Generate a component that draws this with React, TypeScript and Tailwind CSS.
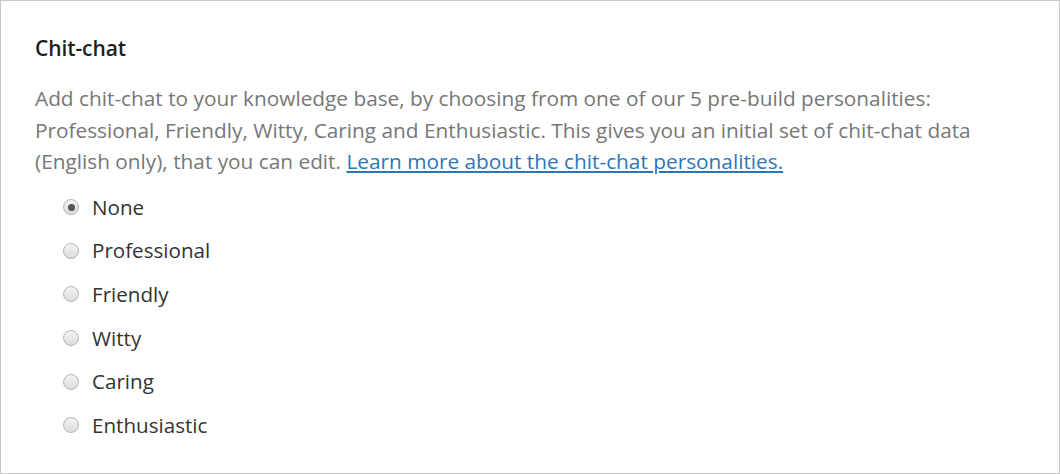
import React from "react";

const options = ["None", "Professional", "Friendly", "Witty", "Caring", "Enthusiastic"];

function Radio({ checked }: { checked: boolean }) {
  return (
    <span className="relative inline-flex h-[16px] w-[16px] shrink-0 items-center justify-center rounded-full border border-[#b4b4b4] bg-gradient-to-b from-[#f4f4f4] to-[#dcdcdc]">
      {checked && <span className="h-[7px] w-[7px] rounded-full bg-[#555]" />}
    </span>
  );
}

export default function App() {
  return (
    <div className="h-[474px] w-[1060px] bg-white" style={{ fontFamily: '"Open Sans", "Noto Sans", sans-serif' }}>
      <div className="h-full w-full border border-[#c8c8c8] pl-[34px] pr-4 pt-[33px]">
        <h2 className="text-[21px] font-semibold leading-[28px] text-[#1f1f1f] tracking-[-0.1px]">Chit-chat</h2>
        <p className="mt-[21px] w-[990px] text-[20.8px] leading-[31.5px] text-[#777]">
          Add chit-chat to your knowledge base, by choosing from one of our 5 pre-build personalities: Professional, Friendly, Witty, Caring and Enthusiastic. This gives you an initial set of chit-chat data (English only), that you can edit.{" "}
          <a href="#" className="text-[#2f75b5] underline">Learn more about the chit-chat personalities.</a>
        </p>
        <div className="mt-[8px] flex flex-col pl-[28px]">
          {options.map((o, i) => (
            <label key={o} className="flex h-[43.6px] items-center gap-[13px] text-[20.6px] text-[#333]">
              <Radio checked={i === 0} />
              <span>{o}</span>
            </label>
          ))}
        </div>
      </div>
    </div>
  );
}
